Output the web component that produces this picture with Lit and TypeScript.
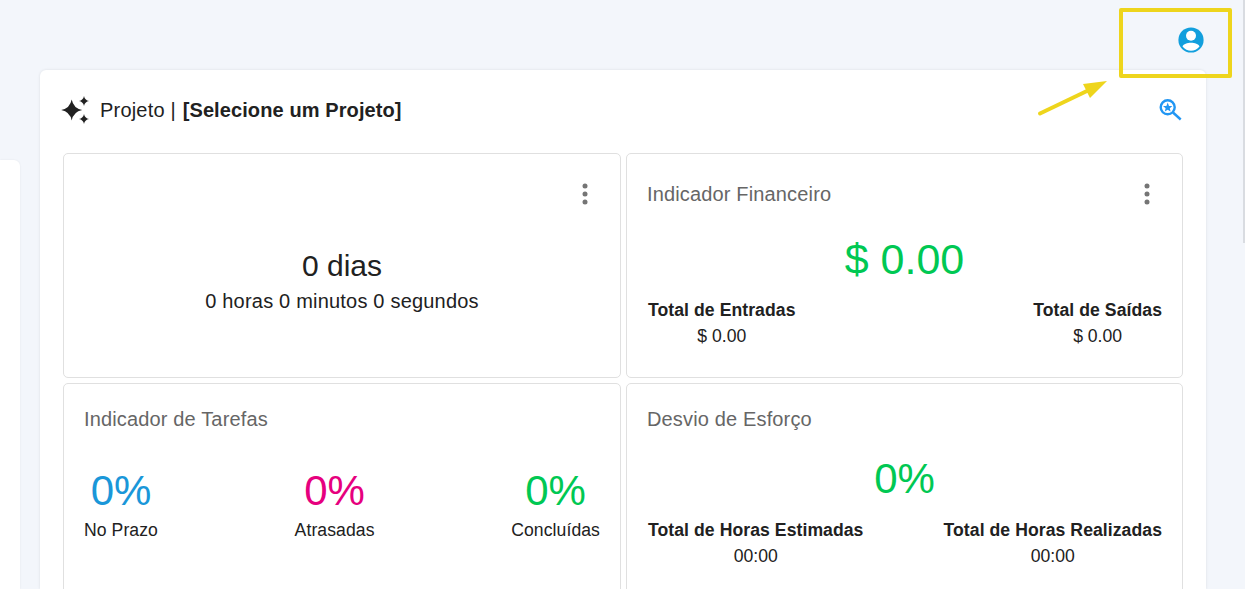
import { LitElement, html, css } from 'lit';
import { customElement } from 'lit/decorators.js';

const dots = html`<svg class="dots" width="6" height="22" viewBox="0 0 6 22" fill="#757575">
  <circle cx="3" cy="3" r="2.5"></circle><circle cx="3" cy="11" r="2.5"></circle><circle cx="3" cy="19" r="2.5"></circle>
</svg>`;

@customElement('app-root')
export class AppRoot extends LitElement {
  static styles = css`
    :host {
      display: block;
      width: 1245px;
      height: 589px;
      overflow: hidden;
      position: relative;
      background: #f3f6fb;
      font-family: 'Liberation Sans', Arial, sans-serif;
      color: #212121;
    }
    .page {
      display: flex;
      height: 589px;
    }
    .side {
      width: 20px;
      height: 429px;
      margin-top: 160px;
      flex: none;
      background: #fff;
      border-radius: 0 6px 0 0;
      box-shadow: 0 0 2px rgba(0, 0, 0, 0.08);
    }
    .main {
      width: 1166px;
      height: 519px;
      margin: 70px 0 0 20px;
      flex: none;
      box-sizing: border-box;
      padding: 0 23px;
      background: #fff;
      border-radius: 6px 6px 0 0;
      box-shadow: 0 0 3px rgba(0, 0, 0, 0.1);
    }
    .title-row {
      height: 80px;
      margin-bottom: 3px;
      display: flex;
      align-items: center;
      justify-content: space-between;
    }
    .title {
      display: flex;
      align-items: center;
      font-size: 20px;
      margin-left: -3px;
      letter-spacing: 0.2px;
      white-space: pre;
    }
    .title svg { margin-right: 10px; }
    .title b { margin-left: 1px; letter-spacing: 0.1px; }
    .grid {
      display: grid;
      grid-template-columns: 558px 557px;
      grid-auto-rows: 225px;
      gap: 5px;
    }
    .card {
      box-sizing: border-box;
      border: 1px solid #e0e0e0;
      border-radius: 5px;
      padding: 20px;
      position: relative;
      height: 225px;
    }
    .card.tall { height: 260px; padding-top: 15px; }
    .dots { position: absolute; top: 29px; right: 32px; }
    .card-title {
      font-size: 20px;
      line-height: 40px;
      height: 40px;
      color: #666;
      letter-spacing: 0.15px;
    }
    .timer { text-align: center; }
    .timer .days { font-size: 30px; line-height: 36px; margin-top: 74px; }
    .timer .rest { font-size: 20px; line-height: 24px; margin-top: 5px; letter-spacing: 0.2px; }
    .big { font-size: 43px; line-height: 54px; text-align: center; color: #00c853; }
    .totals {
      display: flex;
      justify-content: space-between;
      font-size: 17.6px;
      text-align: center;
      padding-left: 1px;
    }
    .totals b { display: block; line-height: 24px; letter-spacing: 0.07px; }
    .totals span { display: block; line-height: 24px; margin-top: 2px; }
    .fin .big { margin-top: 18px; }
    .fin .totals { margin-top: 12px; }
    .tasks {
      display: flex;
      justify-content: space-between;
      margin-top: 25px;
    }
    .task { text-align: center; font-size: 17.6px; letter-spacing: 0.08px; }
    .task .pct { font-size: 42px; line-height: 54px; letter-spacing: 0; }
    .task div + div { line-height: 24px; }
    .dev .big { margin-top: 13px; font-size: 42px; }
    .dev .totals { margin-top: 12px; }
    .highlight {
      position: absolute;
      left: 1119px;
      top: 8px;
      width: 113px;
      height: 70px;
      box-sizing: border-box;
      border: 4px solid #eed51c;
      border-radius: 2px;
    }
    .user { position: absolute; left: 1177px; top: 26px; }
    .arrow { position: absolute; left: 1030px; top: 72px; }
    .scroll {
      position: absolute;
      left: 1243px;
      top: 0;
      width: 2px;
      height: 243px;
      background: #d9dce1;
    }
  `;

  render() {
    return html`
      <div class="page">
        <div class="side"></div>
        <div class="main">
          <div class="title-row">
            <div class="title">
              <svg width="30" height="30" viewBox="0 0 30 30" fill="#212121">
                <path d="M11.7 4.5 Q13.4 13.3 22.2 15 Q13.4 16.7 11.7 25.5 Q10 16.7 1.2 15 Q10 13.3 11.7 4.5 Z"></path>
                <path d="M24 1 Q24.8 5.2 29 6 Q24.8 6.8 24 11 Q23.2 6.8 19 6 Q23.2 5.2 24 1 Z"></path>
                <path d="M24 19 Q24.8 23.2 29 24 Q24.8 24.8 24 29 Q23.2 24.8 19 24 Q23.2 23.2 24 19 Z"></path>
              </svg>
              <span>Projeto | </span><b>[Selecione um Projeto]</b>
            </div>
            <svg width="24" height="24" viewBox="0 0 24 24" fill="none" stroke="#2196f3">
              <circle cx="8.7" cy="9.3" r="7" stroke-width="2.4"></circle>
              <path d="M14 14.5 L21.7 21.5" stroke-width="2.4"></path>
              <path d="M8.7 4.6 L10 7.9 L13.4 8.1 L10.8 10.3 L11.6 13.6 L8.7 11.8 L5.8 13.6 L6.6 10.3 L4 8.1 L7.4 7.9 Z" fill="#2196f3" stroke="none"></path>
            </svg>
          </div>
          <div class="grid">
            <div class="card timer">
              ${dots}
              <div class="days">0 dias</div>
              <div class="rest">0 horas 0 minutos 0 segundos</div>
            </div>
            <div class="card fin">
              ${dots}
              <div class="card-title">Indicador Financeiro</div>
              <div class="big">$ 0.00</div>
              <div class="totals">
                <div><b>Total de Entradas</b><span>$ 0.00</span></div>
                <div><b>Total de Saídas</b><span>$ 0.00</span></div>
              </div>
            </div>
            <div class="card tall">
              <div class="card-title">Indicador de Tarefas</div>
              <div class="tasks">
                <div class="task"><div class="pct" style="color:#1a97d9">0%</div><div>No Prazo</div></div>
                <div class="task"><div class="pct" style="color:#e6007e">0%</div><div>Atrasadas</div></div>
                <div class="task"><div class="pct" style="color:#00c853">0%</div><div>Concluídas</div></div>
              </div>
            </div>
            <div class="card tall dev">
              <div class="card-title">Desvio de Esforço</div>
              <div class="big">0%</div>
              <div class="totals">
                <div><b>Total de Horas Estimadas</b><span>00:00</span></div>
                <div><b>Total de Horas Realizadas</b><span>00:00</span></div>
              </div>
            </div>
          </div>
        </div>
      </div>
      <svg class="user" width="28" height="28" viewBox="0 0 28 28">
        <circle cx="14" cy="14" r="12.6" fill="#129fdd"></circle>
        <circle cx="14" cy="9.8" r="5" fill="#fff"></circle>
        <path d="M5.5 20.5 C7.5 15.5 20.5 15.5 22.5 20.5 C20.5 23.3 17 24.8 14 24.8 C11 24.8 7.5 23.3 5.5 20.5 Z" fill="#fff"></path>
      </svg>
      <div class="highlight"></div>
      <svg class="arrow" width="85" height="50" viewBox="0 0 85 50">
        <path d="M10 41.5 L58 18.5" stroke="#eed51c" stroke-width="4" stroke-linecap="round"></path>
        <path d="M77 9 L53 12 L60 26 Z" fill="#eed51c"></path>
      </svg>
      <div class="scroll"></div>
    `;
  }
}

declare global {
  interface HTMLElementTagNameMap {
    'app-root': AppRoot;
  }
}
